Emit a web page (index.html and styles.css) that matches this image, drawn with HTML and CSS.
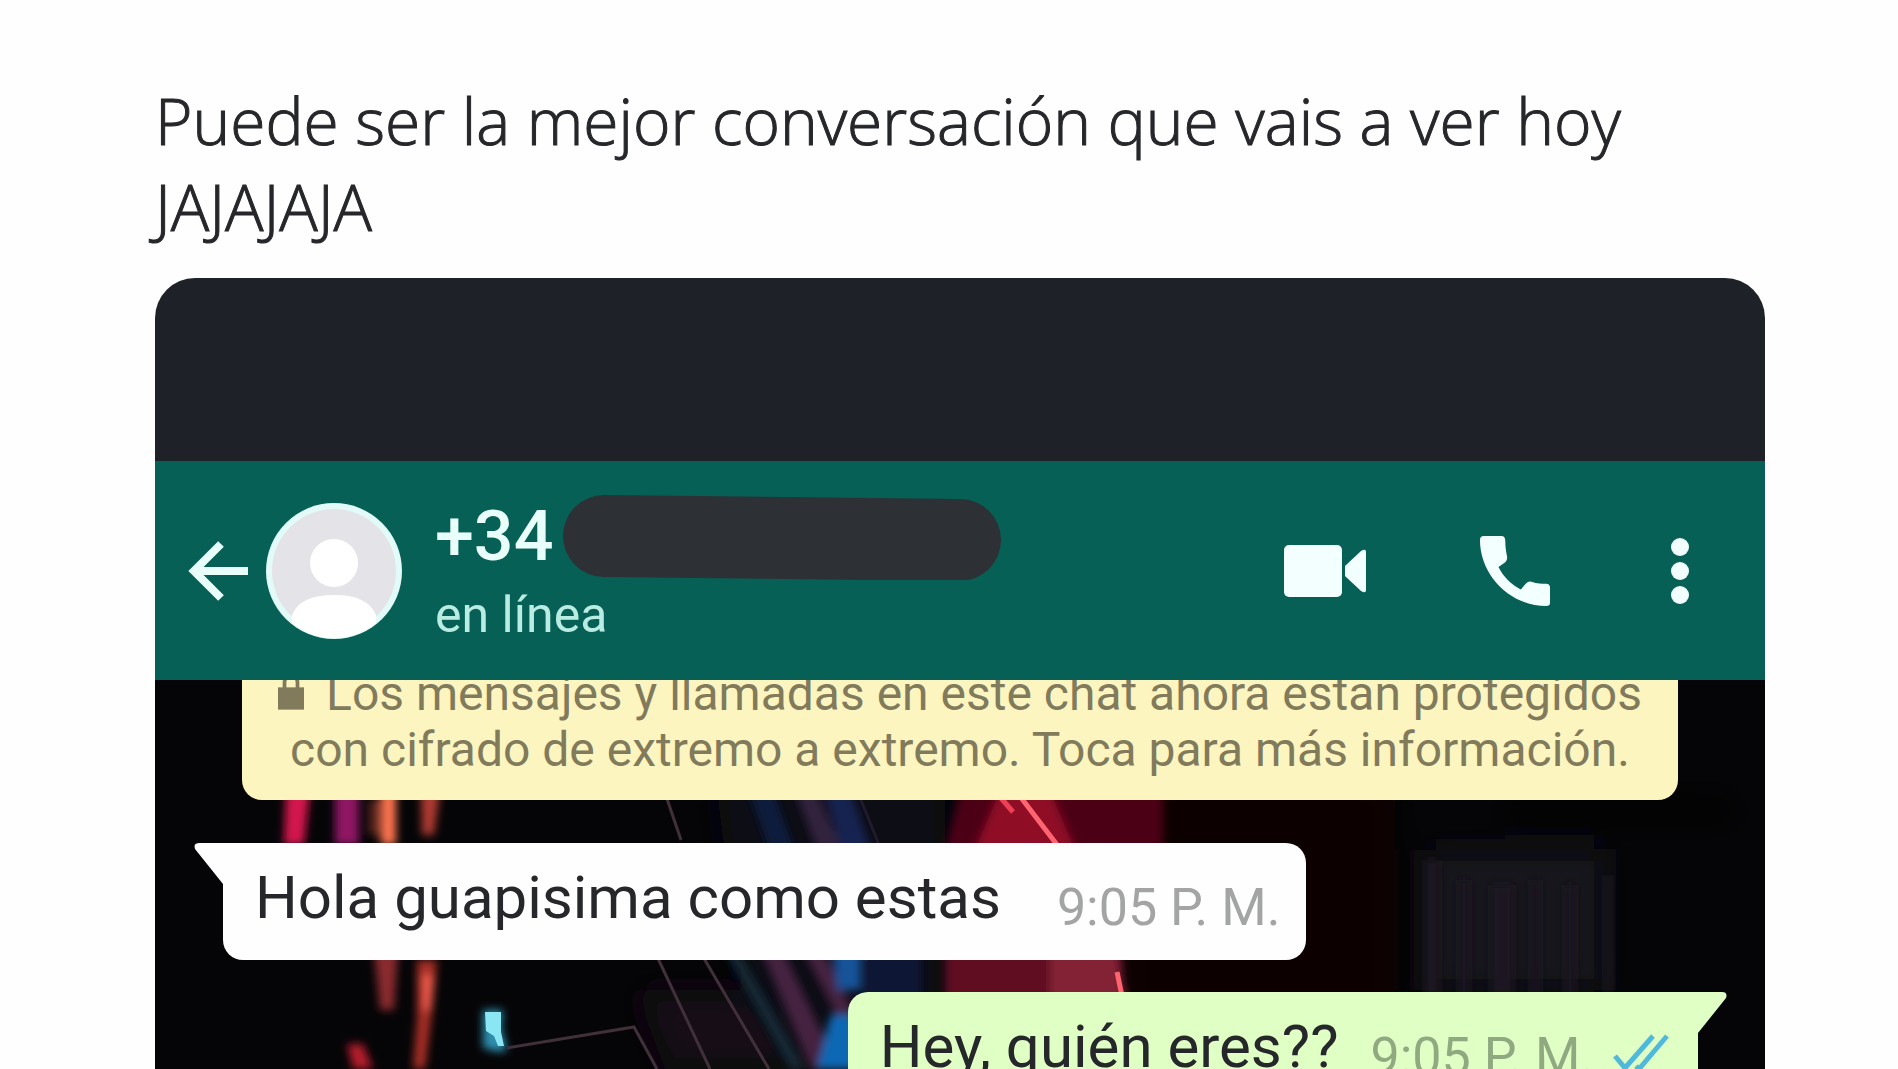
FILE: index.html
```html
<!DOCTYPE html>
<html lang="es">
<head>
<meta charset="utf-8">
<title>Puede ser la mejor conversación</title>
<link rel="stylesheet" href="styles.css">
</head>
<body>
<article class="post">
  <p class="post-text">Puede ser la mejor conversación que vais a ver hoy<br>JAJAJAJA</p>
  <section class="phone">
    <div class="status-bar"></div>
    <header class="chat-header">
      <button class="icon-button" type="button" aria-label="Volver">
        <svg class="icon-back" viewBox="0 0 64 64"><path d="M61 32H8M34 5L7 32l27 27" fill="none" stroke="currentColor" stroke-width="8"/></svg>
      </button>
      <svg class="avatar" viewBox="0 0 136 136" aria-hidden="true">
        <defs><clipPath id="face"><circle cx="68" cy="68" r="67"/></clipPath></defs>
        <circle cx="68" cy="68" r="68" fill="#e2fbf8"/>
        <circle cx="68" cy="68" r="62" fill="#e4e4e8"/>
        <g clip-path="url(#face)" fill="#fff"><circle cx="68" cy="60" r="24"/><path d="M26 112Q34 92 68 92t42 20v30H26z"/></g>
      </svg>
      <div class="contact">
        <div class="contact-line"><h1 class="phone-number">+34</h1><svg class="redaction" viewBox="0 0 440 88" aria-hidden="true"><path d="M42 44L398 48" stroke="#2d3035" stroke-width="82" stroke-linecap="round"/></svg></div>
        <p class="presence">en línea</p>
      </div>
      <nav class="actions">
        <button class="icon-button" type="button" aria-label="Videollamada">
          <svg class="icon-video" viewBox="0 0 84 54"><rect x="1" y="1" width="58" height="52" rx="5" fill="currentColor"/><path d="M62 22L78 7q5-3 5 1v38q0 4-5 1L62 32z" fill="currentColor"/></svg>
        </button>
        <button class="icon-button" type="button" aria-label="Llamar">
          <svg class="icon-call" viewBox="0 0 74 74"><path d="M5 1h18q4 0 4 5c0 7 1 12 2 17q0 3-2 5l-7 5c5 10 13 18 23 23l5-6q3-3 6-2c6 2 10 2 15 2q4 0 4 4v16q0 3-4 3C32 73 1 42 1 5q0-4 4-4z" fill="currentColor"/></svg>
        </button>
        <button class="icon-button" type="button" aria-label="Más opciones">
          <svg class="icon-more" viewBox="0 0 18 66" fill="currentColor"><circle cx="9" cy="9" r="9"/><circle cx="9" cy="33" r="9"/><circle cx="9" cy="57" r="9"/></svg>
        </button>
      </nav>
    </header>
    <main class="chat">
      <svg class="wallpaper" viewBox="0 0 1610 389" preserveAspectRatio="none" aria-hidden="true">
        <defs>
          <filter id="soft" x="-50%" y="-20%" width="200%" height="140%"><feGaussianBlur stdDeviation="4"/></filter>
          <filter id="haze" x="-20%" y="-40%" width="140%" height="180%"><feGaussianBlur stdDeviation="16"/></filter>
        </defs>
        <rect width="1610" height="389" fill="#050507"/>
        <g filter="url(#haze)">
          <path d="M560 100H790V389H600z" fill="#0b0a18"/>
          <path d="M970 100H1240V389H970z" fill="#100405"/>
          <path d="M1270 170h180v140h-180z" fill="#15121b"/>
          <path d="M1350 120h230v20h-230z" fill="#0a0d11"/>
          <path d="M480 310h100l60 79H510z" fill="#170914"/>
        </g>
        <g fill="#1a1720" filter="url(#soft)"><path d="M1270 180h14v135h-14zM1304 200h10v115h-10zM1336 205h22v110h-22zM1376 200h9v115h-9zM1410 205h10v110h-10zM1450 195h6v120h-6z"/></g>
        <g filter="url(#soft)">
          <path d="M131 110h24l-6 55h-20z" fill="#d3184e"/>
          <path d="M180 110h24v55h-24z" fill="#8e1464"/>
          <path d="M214 120h10v35h-10z" fill="#602724"/>
          <path d="M226 110h15v55h-15z" fill="#ff7550"/>
          <path d="M266 110h19l-6 45h-12z" fill="#b03b30"/>
          <path d="M219 270h24l-4 60h-14z" fill="#8a2b2d"/>
          <path d="M262 280h20l-6 60-6 49h-12l4-50z" fill="#a72d27"/>
          <path d="M267 295h12l-3 35h-8z" fill="#ea5948"/>
          <path d="M192 364h16l10 25h-20z" fill="#b31c2c"/>
          <path d="M590 100h24l25 70h-24z" fill="#111f3d"/>
          <path d="M636 100h20l32 70h-26z" fill="#33203e"/>
          <path d="M666 100h26l24 70h-30z" fill="#162450"/>
          <path d="M808 100h200v70H790z" fill="#4c0619"/>
          <path d="M850 100h40l30 70H820z" fill="#900a25"/>
          <path d="M790 270h178v50H790z" fill="#600a23"/>
          <path d="M895 270h65l12 50h-77z" fill="#842036"/>
          <path d="M606 270h22l56 119h-28zM648 270h20l30 60-4 30z" fill="#442140"/>
          <path d="M570 270h12l68 119h-14z" fill="#122a38"/>
          <path d="M678 270h28v40h-24z" fill="#185399"/>
          <path d="M710 270h56v50h-56z" fill="#0c1736"/>
          <path d="M676 335h30v54h-44z" fill="#1067b4"/>
        </g>
        <path d="M328 330h20l-2 18 6 22-8 2-16-4z" fill="#2d8fae" filter="url(#soft)"/>
        <path d="M330 332h16v20l3 14h-6l-4-10-8-5z" fill="#8be6f4"/>
        <g fill="none" stroke="#41303a" stroke-width="3">
          <path d="M352 368l127-21 23 42M509 110l17 50M499 270l56 119M544 270l70 119M704 270l8 10"/>
          <path d="M700 105l24 60" stroke="#201a2c"/>
        </g>
        <path d="M864 115l42 55M962 292l5 24" stroke="#ff6470" stroke-width="5" fill="none"/>
        <path d="M846 118l12 14" stroke="#ef4053" stroke-width="5"/>
      </svg>
      <p class="notice"><svg class="icon-lock" viewBox="0 0 28 38" aria-hidden="true"><path d="M0 14h28v24H0z" fill="currentColor"/><path d="M7 16V9q0-7 7-7t7 7v7" fill="none" stroke="currentColor" stroke-width="4"/></svg>Los mensajes y llamadas en este chat ahora están protegidos<br>con cifrado de extremo a extremo. Toca para más información.</p>
      <div class="bubble bubble-in">
        <svg class="tail tail-in" viewBox="0 0 34 46" aria-hidden="true"><path d="M34 0H6Q0 0 2 6L30 41V46h4z" fill="currentColor"/></svg>
        <span class="message">Hola guapisima como estas</span><time class="time">9:05 P. M.</time>
      </div>
      <div class="bubble bubble-out">
        <svg class="tail tail-out" viewBox="0 0 34 46" aria-hidden="true"><path d="M0 0h28q6 0 4 6L4 41v5H0z" fill="currentColor"/></svg>
        <span class="message">Hey, quién eres??</span><time class="time">9:05 P. M.</time>
        <svg class="icon-read" viewBox="0 0 60 42" aria-hidden="true"><path d="M3 23l10 12L41 3M24 33l3 3L55 3" fill="none" stroke="currentColor" stroke-width="5"/></svg>
      </div>
    </main>
  </section>
</article>
</body>
</html>
```
FILE: styles.css
```css
* { box-sizing: border-box; }

body {
  margin: 0;
  height: 100vh;
  overflow: hidden;
  background: #fefefe;
  font-family: Roboto, "Liberation Sans", sans-serif;
}

h1, p { margin: 0; font-weight: 400; }

.post {
  display: flex;
  flex-direction: column;
  height: 100%;
  padding: 78px 133px 0 155px;
}

.post-text {
  padding-bottom: 28px;
  color: #25272a;
  font-family: "Open Sans", "Noto Sans", sans-serif;
  font-size: 64px;
  font-weight: 300;
  line-height: 86px;
  -webkit-text-stroke: 1px #25272a;
}

.phone {
  display: flex;
  flex: 1;
  flex-direction: column;
  min-height: 0;
  overflow: hidden;
  border-radius: 40px 40px 0 0;
  background: #1e2127;
}

.status-bar { flex: none; height: 183px; }

.chat-header {
  display: flex;
  flex: none;
  align-items: center;
  height: 219px;
  padding: 0 76px 0 32px;
  background: #076055;
  color: #e9fffa;
}

.icon-button {
  display: flex;
  padding: 0;
  border: 0;
  background: none;
  color: inherit;
}

.icon-back { width: 64px; height: 64px; }
.avatar { width: 136px; height: 136px; margin-left: 15px; }
.contact { margin-left: 33px; }
.contact-line { display: flex; align-items: center; }

.phone-number {
  font-size: 70px;
  font-weight: 500;
  line-height: 88px;
}

.redaction { width: 440px; height: 88px; margin-left: 9px; }

.presence {
  color: #b9ece2;
  font-size: 50px;
  line-height: 70px;
}

.actions {
  display: flex;
  align-items: center;
  margin-left: auto;
  color: #f3ffff;
}

.icon-video { width: 84px; height: 54px; }
.icon-call { width: 72px; height: 72px; margin-left: 112px; }
.icon-more { width: 18px; height: 66px; margin-left: 120px; }

.chat {
  position: relative;
  display: flex;
  flex: 1;
  flex-direction: column;
  min-height: 0;
  overflow: hidden;
  background: #050507;
}

.wallpaper {
  position: absolute;
  top: 0;
  left: 0;
  width: 100%;
  height: 389px;
}

.notice {
  position: relative;
  align-self: center;
  flex: none;
  margin: -32px 0 0;
  padding: 18px 36px 22px;
  border-radius: 0 0 20px 20px;
  background: #fcf5c0;
  color: #817b5c;
  font-size: 48px;
  line-height: 56px;
  text-align: center;
  white-space: nowrap;
}

.icon-lock { width: 26px; height: 36px; margin-right: 22px; }

.bubble {
  position: relative;
  display: flex;
  flex: none;
  align-items: center;
  height: 117px;
  padding-bottom: 8px;
  border-radius: 20px;
  white-space: nowrap;
}

.bubble-in {
  align-self: flex-start;
  margin: 43px 0 0 68px;
  padding-right: 26px;
  padding-left: 32px;
  border-top-left-radius: 0;
  background: #fefefe;
  color: #fefefe;
}

.bubble-out {
  align-self: flex-end;
  margin: 32px 67px 0 0;
  padding-right: 26px;
  padding-left: 32px;
  border-top-right-radius: 0;
  background: #dfffc5;
  color: #dfffc5;
}

.tail { position: absolute; top: 0; width: 34px; height: 46px; }
.tail-in { left: -30px; }
.tail-out { right: -30px; }

.message { color: #25272a; font-size: 60px; line-height: 80px; }

.time {
  margin: 20px 0 0 56px;
  color: #a3a5a5;
  font-size: 52px;
  line-height: 64px;
}

.bubble-out .time { margin-left: 32px; color: #91a981; }

.icon-read { width: 60px; height: 42px; margin: 14px 0 0 18px; color: #4fb9dc; }
```
